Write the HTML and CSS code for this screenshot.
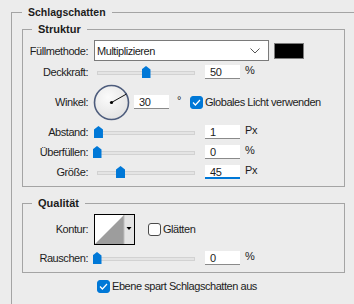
FILE: index.html
```html
<!DOCTYPE html>
<html lang="de">
<head>
    <meta charset="UTF-8">
    <meta name="viewport" content="width=device-width, initial-scale=1.0">
    <title>Schlagschatten</title>
    <link rel="stylesheet" href="styles.css">
</head>
<body>
    <fieldset class="group outer">
        <legend>Schlagschatten</legend>

        <fieldset class="group sub struktur">
            <legend>Struktur</legend>

            <div class="row row-blend">
                <label class="lbl">Füllmethode:</label>
                <div class="select">
                    <span>Multiplizieren</span>
                    <svg class="chevron" width="10" height="6" viewBox="0 0 10 6"><path d="M0.5 0.5 L5 5 L9.5 0.5" fill="none" stroke="#555" stroke-width="1"/></svg>
                </div>
                <div class="swatch"></div>
            </div>

            <div class="row">
                <label class="lbl">Deckkraft:</label>
                <div class="slider"><div class="thumb" style="left: 50%"></div></div>
                <div class="num">50</div><span class="unit">%</span>
            </div>

            <div class="row row-angle">
                <label class="lbl">Winkel:</label>
                <div class="dial">
                    <svg width="37" height="37" viewBox="0 0 37 37">
                        <defs>
                            <radialGradient id="dialFill" cx="40%" cy="35%" r="70%">
                                <stop offset="0" stop-color="#fbfbfb"/>
                                <stop offset="1" stop-color="#e2e2e2"/>
                            </radialGradient>
                        </defs>
                        <circle cx="18.5" cy="18.5" r="17" fill="url(#dialFill)" stroke="#4d5c7c" stroke-width="1.6"/>
                        <line x1="18.5" y1="18.5" x2="33.5" y2="10" stroke="#111" stroke-width="1"/>
                        <circle cx="18.5" cy="18.5" r="1.6" fill="#000"/>
                    </svg>
                </div>
                <div class="num">30</div><span class="unit deg">°</span>
                <label class="check check-light">
                    <span class="box on"><svg width="9" height="7" viewBox="0 0 9 7"><path d="M1 3.5 L3.4 6 L8 1" fill="none" stroke="#fff" stroke-width="1.2"/></svg></span>
                    Globales Licht verwenden
                </label>
            </div>

            <div class="row">
                <label class="lbl">Abstand:</label>
                <div class="slider"><div class="thumb" style="left: 1.5%"></div></div>
                <div class="num">1</div><span class="unit">Px</span>
            </div>

            <div class="row">
                <label class="lbl">Überfüllen:</label>
                <div class="slider"><div class="thumb" style="left: 0%"></div></div>
                <div class="num">0</div><span class="unit">%</span>
            </div>

            <div class="row">
                <label class="lbl">Größe:</label>
                <div class="slider"><div class="thumb" style="left: 24%"></div></div>
                <div class="num focus">45</div><span class="unit">Px</span>
            </div>
        </fieldset>

        <fieldset class="group sub qualitaet">
            <legend>Qualität</legend>

            <div class="row row-contour">
                <label class="lbl">Kontur:</label>
                <div class="contour">
                    <svg width="41" height="31" viewBox="0 0 41 31">
                        <rect x="0.5" y="0.5" width="40" height="30" fill="#fff" stroke="#000"/>
                        <path d="M1 30 L30 1 L30 30 Z" fill="#9d9d9d"/>
                        <rect x="30" y="1" width="10" height="29" fill="#e4e4e4"/>
                        <line x1="30" y1="1" x2="30" y2="30" stroke="#bdbdbd" stroke-width="1"/>
                        <path d="M32.5 13 L37.5 13 L35 16 Z" fill="#000"/>
                    </svg>
                </div>
                <label class="check check-smooth">
                    <span class="box"></span>
                    Glätten
                </label>
            </div>

            <div class="row">
                <label class="lbl">Rauschen:</label>
                <div class="slider"><div class="thumb" style="left: 0%"></div></div>
                <div class="num">0</div><span class="unit">%</span>
            </div>
        </fieldset>

        <label class="check check-knockout">
            <span class="box on"><svg width="9" height="7" viewBox="0 0 9 7"><path d="M1 3.5 L3.4 6 L8 1" fill="none" stroke="#fff" stroke-width="1.2"/></svg></span>
            Ebene spart Schlagschatten aus
        </label>
    </fieldset>
</body>
</html>
```

FILE: styles.css
```css
body { margin: 0; width: 354px; height: 304px; overflow: hidden; background-color: #ececec; color: #1c1c1c; font-family: "Liberation Sans", Arial, sans-serif; font-size: 11px; letter-spacing: -0.45px; }

.group { border: 1px solid #a4a4a4; margin: 0; padding: 0; min-width: 0; box-sizing: border-box; }
.group legend { font-weight: bold; line-height: 14px; padding: 0 6px; letter-spacing: 0; }

/* outer group runs off the right and bottom of the view */
.outer { margin: 5px 0 0 11px; width: 343px; height: 299px; padding: 0 0 0 10px; border-right: none; border-bottom: none; }
.outer > legend { margin-left: 0; font-size: 10.5px; }

.sub { width: 323px; margin-top: 3px; }
.sub legend { margin-left: 9px; }
.struktur { padding: 4px 0 4px 0; }
.qualitaet { margin-top: 9px; padding: 0 0 4px 0; }

.row { display: flex; align-items: center; height: 20px; }
.row-blend { height: 21px; margin-bottom: 1px; }
.row-angle { height: 40px; }
.row-contour { height: 38px; }

.lbl { width: 65px; margin-right: 6px; text-align: right; white-space: nowrap; }

.select { width: 175px; height: 21px; box-sizing: border-box; background-color: #fff; border: 1px solid #7a7a7a; display: flex; align-items: center; justify-content: space-between; padding: 0 8px 0 2px; }
.swatch { width: 30px; height: 16px; box-sizing: border-box; margin-left: 5px; background-color: #000; border: 1px solid #7c7c7c; }

.slider { position: relative; width: 98px; height: 20px; margin: 0 3px; }
.slider::before { content: ""; position: absolute; left: 0; right: 0; top: 9px; height: 2px; background-color: #e4e4e4; border: 1px solid #d2d2d2; }
.thumb { position: absolute; top: 4px; width: 9px; height: 12px; margin-left: -4.5px; background-color: #0078d7; clip-path: polygon(50% 0, 100% 30%, 100% 100%, 0 100%, 0 30%); }

.num { width: 35px; height: 14px; box-sizing: border-box; margin-left: 7px; padding-left: 5px; background-color: #fff; border-bottom: 1px solid #8a8a8a; line-height: 14px; }
.num.focus { border-bottom: 2px solid #0078d7; }
.unit { margin-left: 5px; align-self: flex-start; margin-top: 2px; }

.dial { width: 37px; height: 37px; margin-left: -1px; }
.dial svg { display: block; }
.row-angle .num { margin-left: 4px; }
.deg { margin-left: 8px; align-self: center; margin-top: -4px; }

.check { display: flex; align-items: center; white-space: nowrap; }
.box { width: 13px; height: 13px; box-sizing: border-box; border-radius: 3px; border: 1px solid #4a4a4a; background-color: #fdfdfd; margin-right: 2px; display: flex; align-items: center; justify-content: center; }
.box.on { background-color: #0078d7; border-color: #0078d7; }
.check-light { margin-left: 9px; }
.check-smooth { margin-left: 13px; }
.check-knockout { margin: 3px 0 0 75px; height: 20px; }

.contour { width: 41px; height: 31px; }
.contour svg { display: block; }
```
